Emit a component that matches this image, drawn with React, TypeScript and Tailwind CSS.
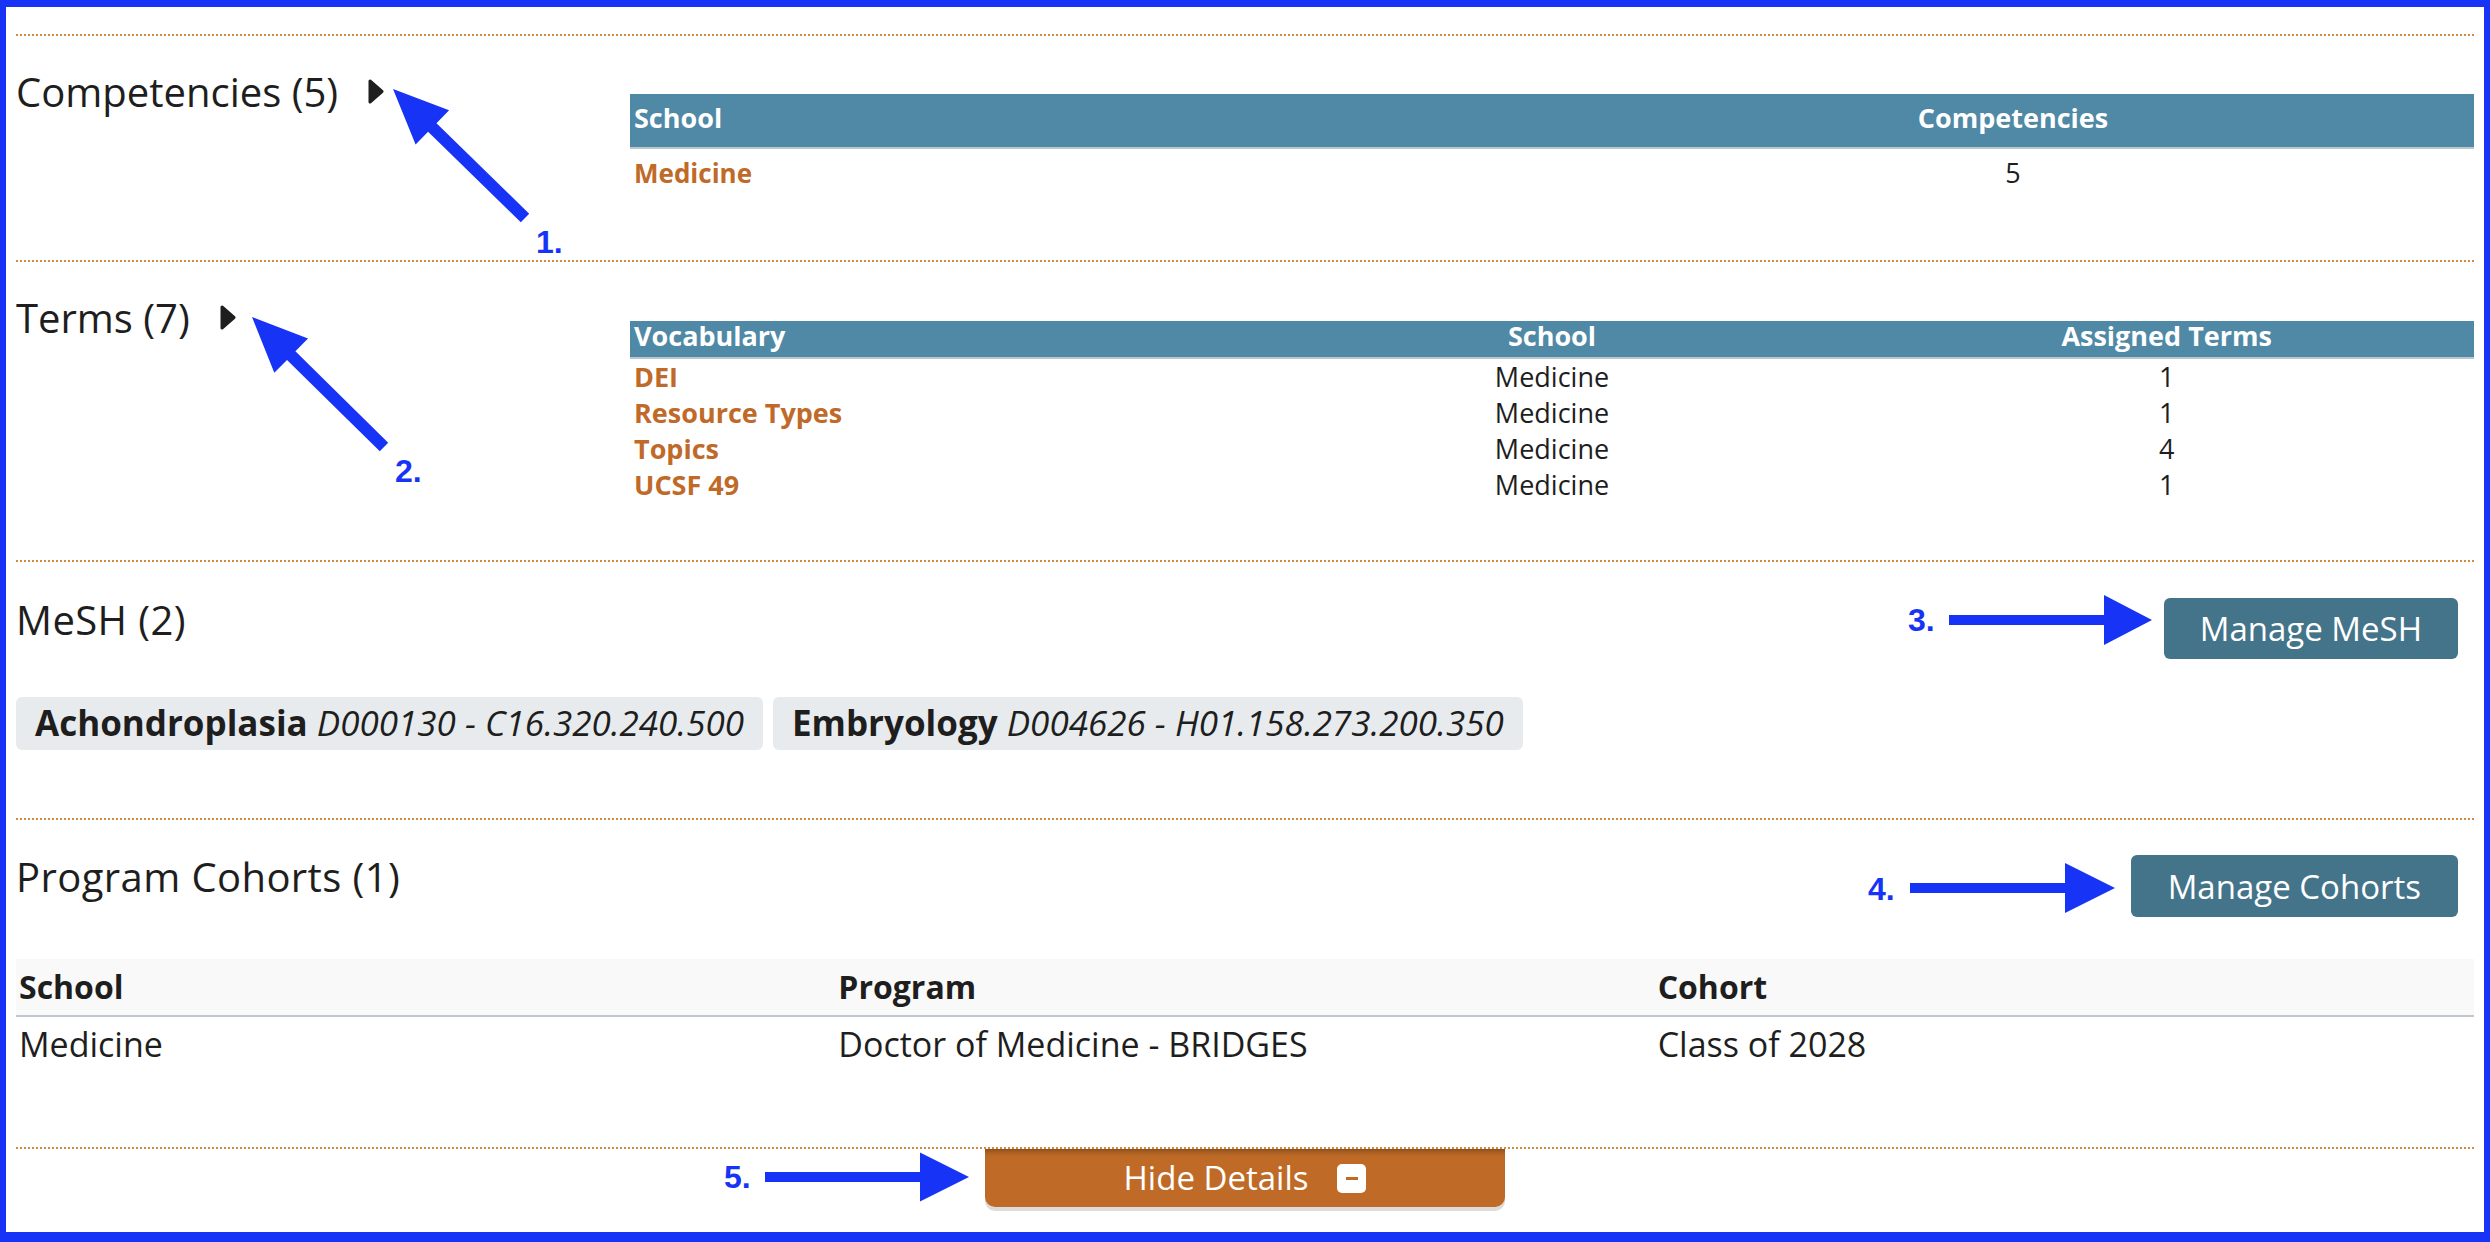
import React from 'react';

type Pt = [number, number];

// polygon for a fat annotation arrow, tail -> tip
function arrowPoints(tail: Pt, tip: Pt, headLen: number, headW: number, shaft: number) {
  const dx = tip[0] - tail[0];
  const dy = tip[1] - tail[1];
  const len = Math.hypot(dx, dy);
  const ux = dx / len;
  const uy = dy / len;
  const px = -uy;
  const py = ux;
  const bx = tip[0] - ux * headLen;
  const by = tip[1] - uy * headLen;
  const pts: Pt[] = [
    [tail[0] + (px * shaft) / 2, tail[1] + (py * shaft) / 2],
    [bx + (px * shaft) / 2, by + (py * shaft) / 2],
    [bx + (px * headW) / 2, by + (py * headW) / 2],
    tip,
    [bx - (px * headW) / 2, by - (py * headW) / 2],
    [bx - (px * shaft) / 2, by - (py * shaft) / 2],
    [tail[0] - (px * shaft) / 2, tail[1] - (py * shaft) / 2],
  ];
  return pts.map((p) => `${p[0].toFixed(1)},${p[1].toFixed(1)}`).join(' ');
}

const arrows = [
  { tail: [525, 218] as Pt, tip: [393, 89] as Pt, hl: 55, hw: 48, s: 12, label: '1.', lx: 536, ly: 253 },
  { tail: [384, 447] as Pt, tip: [252, 317] as Pt, hl: 55, hw: 48, s: 12, label: '2.', lx: 395, ly: 482 },
  { tail: [1949, 620] as Pt, tip: [2152, 620] as Pt, hl: 48, hw: 50, s: 10, label: '3.', lx: 1908, ly: 631 },
  { tail: [1910, 888] as Pt, tip: [2115, 888] as Pt, hl: 50, hw: 50, s: 10, label: '4.', lx: 1868, ly: 900 },
  { tail: [765, 1177] as Pt, tip: [969, 1177] as Pt, hl: 49, hw: 49, s: 10, label: '5.', lx: 724, ly: 1188 },
];

function Caret({ className }: { className?: string }) {
  return (
    <svg className={className} width="16" height="25" viewBox="0 0 16 25">
      <polygon points="2,2 14,12.5 2,23" fill="#1e1e1e" stroke="#1e1e1e" strokeWidth="3" strokeLinejoin="round" />
    </svg>
  );
}

const terms = [
  { name: 'DEI', count: 1 },
  { name: 'Resource Types', count: 1 },
  { name: 'Topics', count: 4 },
  { name: 'UCSF 49', count: 1 },
];

const mesh = [
  { name: 'Achondroplasia', code: 'D000130 - C16.320.240.500' },
  { name: 'Embryology', code: 'D004626 - H01.158.273.200.350' },
];

export default function App() {
  return (
    <div className="relative w-[2490px] h-[1242px] bg-white overflow-hidden">
      <div className="h-full border-[#1733f5] border-t-[7px] border-l-[6px] border-r-[6px] border-b-[10px] px-[10px] pt-[27px] font-['Open_Sans',sans-serif] text-[#1e1e1e]">
        {/* Competencies */}
        <section className="flex h-[226px] border-t-2 border-dotted border-[#d08a44]">
          <div className="w-[614px] pt-[32px] flex items-start">
            <h2 className="text-[40px] leading-[48px]">Competencies (5)</h2>
            <Caret className="ml-[30px] mt-[11px]" />
          </div>
          <div className="flex-1 pt-[58px] text-[27px]">
            <div className="grid grid-cols-2 h-[55px] bg-[#4f89a6] border-b-2 border-[#bcc6cd] text-white font-bold leading-[48px]">
              <div className="px-[4px]">School</div>
              <div className="px-[4px] text-center">Competencies</div>
            </div>
            <div className="grid grid-cols-2 pt-[6px] leading-[36px]">
              <div className="px-[4px] font-bold text-[#c06a29] text-[26px]">Medicine</div>
              <div className="px-[4px] text-center">5</div>
            </div>
          </div>
        </section>

        {/* Terms */}
        <section className="flex h-[300px] border-t-2 border-dotted border-[#d08a44]">
          <div className="w-[614px] pt-[32px] flex items-start">
            <h2 className="text-[40px] leading-[48px]">Terms (7)</h2>
            <Caret className="ml-[30px] mt-[11px]" />
          </div>
          <div className="flex-1 pt-[59px] text-[27px]">
            <div className="grid grid-cols-3 h-[38px] bg-[#4f89a6] border-b-2 border-[#bcc6cd] text-white font-bold leading-[30px]">
              <div className="px-[4px]">Vocabulary</div>
              <div className="px-[4px] text-center">School</div>
              <div className="px-[4px] text-center">Assigned Terms</div>
            </div>
            {terms.map((t) => (
              <div key={t.name} className="grid grid-cols-3 h-[36px] leading-[36px]">
                <div className="px-[4px] font-bold text-[#c06a29]">{t.name}</div>
                <div className="px-[4px] text-center">Medicine</div>
                <div className="px-[4px] text-center">{t.count}</div>
              </div>
            ))}
          </div>
        </section>

        {/* MeSH */}
        <section className="h-[258px] pt-[34px] border-t-2 border-dotted border-[#d08a44]">
          <div className="flex items-start justify-between">
            <h2 className="text-[40px] leading-[48px] tracking-[0.01em]">MeSH (2)</h2>
            <button className="mt-[2px] mr-[16px] h-[61px] px-[36px] rounded-[6px] bg-[#43748a] text-white text-[33px] leading-none">
              Manage MeSH
            </button>
          </div>
          <div className="mt-[38px] flex gap-[10px]">
            {mesh.map((m) => (
              <div key={m.name} className="h-[53px] px-[19px] flex items-center rounded-[6px] bg-[#e8ebed] text-[35px]">
                <span className="font-bold">{m.name}</span>
                <span className="italic">&nbsp;{m.code}</span>
              </div>
            ))}
          </div>
        </section>

        {/* Program Cohorts */}
        <section className="h-[329px] pt-[33px] border-t-2 border-dotted border-[#d08a44]">
          <div className="flex items-start justify-between">
            <h2 className="text-[40px] leading-[48px] tracking-[0.01em]">Program Cohorts (1)</h2>
            <button className="mt-[2px] mr-[16px] h-[62px] px-[37px] rounded-[6px] bg-[#43748a] text-white text-[33px] leading-none">
              Manage Cohorts
            </button>
          </div>
          <div className="mt-[42px]">
            <div className="grid grid-cols-3 h-[58px] items-center bg-[#f9f9f9] border-b-2 border-[#c0c6cb] font-bold text-[32px]">
              <div className="px-[3px]">School</div>
              <div className="px-[3px]">Program</div>
              <div className="px-[3px]">Cohort</div>
            </div>
            <div className="grid grid-cols-3 h-[54px] items-center text-[34px]">
              <div className="px-[3px]">Medicine</div>
              <div className="px-[3px]">Doctor of Medicine - BRIDGES</div>
              <div className="px-[3px]">Class of 2028</div>
            </div>
          </div>
        </section>

        {/* Hide details */}
        <section className="border-t-2 border-dotted border-[#d08a44]">
          <button className="ml-[969px] w-[520px] h-[58px] flex items-center justify-center gap-[29px] rounded-b-[10px] bg-[#bf6b27] text-white text-[33px] shadow-[inset_0_7px_6px_-5px_rgba(0,0,0,0.35),0_4px_0_#dcdcdc]">
            <span>Hide Details</span>
            <span className="w-[29px] h-[29px] rounded-[5px] bg-white flex items-center justify-center">
              <span className="w-[12px] h-[3px] bg-[#bf6b27]" />
            </span>
          </button>
        </section>
      </div>

      {/* annotation arrows */}
      <svg className="absolute top-0 left-0 pointer-events-none" width="2490" height="1242" viewBox="0 0 2490 1242">
        {arrows.map((a) => (
          <g key={a.label}>
            <polygon points={arrowPoints(a.tail, a.tip, a.hl, a.hw, a.s)} fill="#1733f5" />
            <text x={a.lx} y={a.ly} fill="#1733f5" fontSize="32" fontWeight="bold" fontFamily="'Liberation Sans', Arial, sans-serif">
              {a.label}
            </text>
          </g>
        ))}
      </svg>
    </div>
  );
}
